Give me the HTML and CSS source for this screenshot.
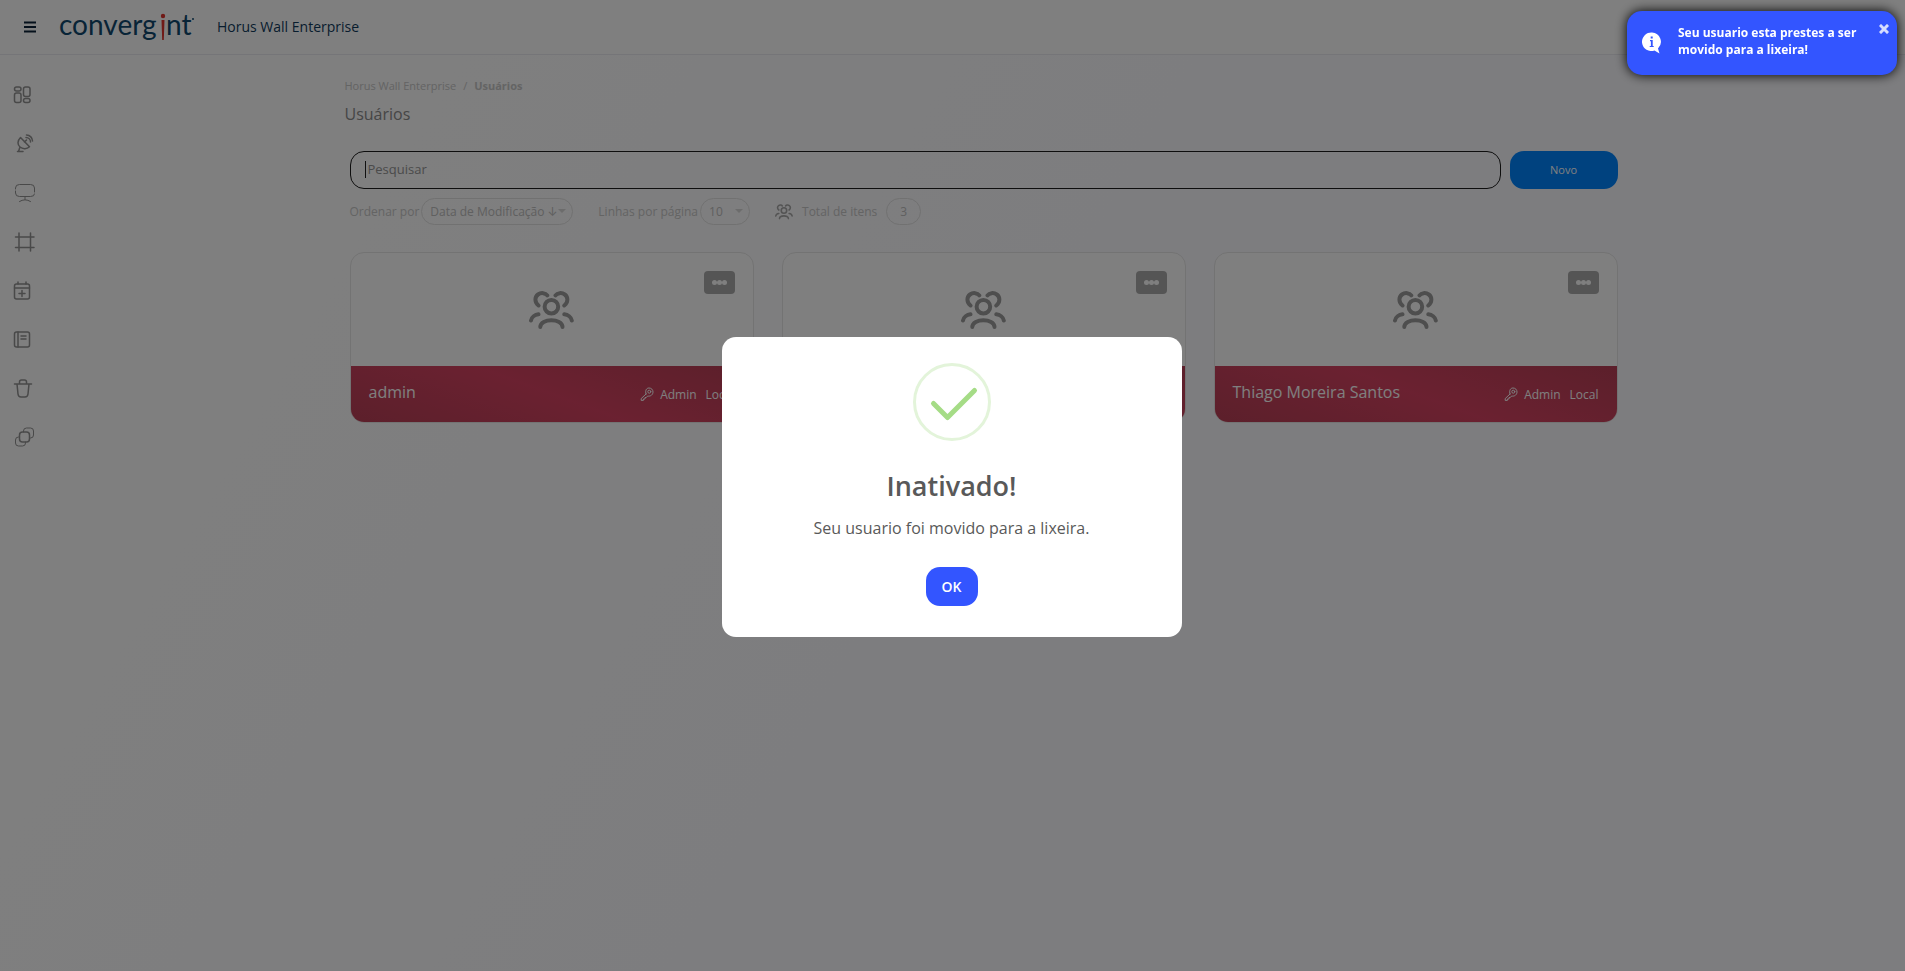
FILE: index.html
```html
<!DOCTYPE html>
<html lang="pt-BR">
<head>
    <meta charset="UTF-8">
    <meta name="viewport" content="width=device-width, initial-scale=1">
    <title>Horus Wall Enterprise</title>
    <link rel="stylesheet" href="styles.css">
</head>
<body>
<!--shared icons-->
<svg class="sprite" aria-hidden="true">
    <symbol id="users" viewBox="0 0 45 39">
        <circle cx="22.4" cy="15.7" r="6.8"/>
        <path d="M11.3 36C11.3 27 33.5 27 33.5 36M2 29.5C2.5 26 6 23.7 9.5 23.3M42.8 29.5C42.3 26 38.8 23.7 35.3 23.3M9.5 14.5C5.5 11.5 5.5 6 9 3.5C12 1.3 16.5 1.8 18.3 4.3M35.3 14.5C39.3 11.5 39.3 6 35.8 3.5C32.8 1.3 28.3 1.8 26.5 4.3"/>
    </symbol>
    <symbol id="key" viewBox="0 0 14 14">
        <path d="M6 7L1.2 11.6V13.4H3.4V12H5V10.5H6.3L7.6 9C10.8 9.7 13 7.4 13 5C13 2.7 11.3 1 9 1C6.4 1 4.9 3.6 6 7Z"/>
        <circle cx="9.3" cy="4.7" r="1.5"/>
    </symbol>
</svg>

<!--header-->
<header class="header">
    <button class="menu_btn" type="button" aria-label="Menu">
        <svg width="12" height="12" viewBox="0 0 12 12"><path d="M0 1.5H12M0 6H12M0 10.5H12"/></svg>
    </button>
    <a class="logo" href="#" aria-label="convergint">
        <svg width="138" height="44" viewBox="0 -6 138 44">
            <text x="0" y="24">converg</text>
            <text x="107" y="24">nt</text>
            <circle class="logo_red" cx="104" cy="5" r="2.2"/>
            <path class="logo_red" d="M102.5 9H105.5L104.8 29H103.2Z"/>
            <circle class="logo_mark" cx="134" cy="8" r="1"/>
        </svg>
    </a>
    <span class="header_title">Horus Wall Enterprise</span>
</header>

<div class="layout">
    <!--side menu-->
    <nav class="sidebar">
        <a href="#" aria-label="Dashboard">
            <svg viewBox="0 0 20 20"><rect x="1" y="2" width="6.5" height="4" rx="2"/><rect x="1" y="8" width="6.5" height="9.5" rx="2"/><rect x="10" y="2" width="6.5" height="9.5" rx="2"/><rect x="10" y="13.5" width="6.5" height="4" rx="2"/></svg>
        </a>
        <a href="#" aria-label="Antena">
            <svg viewBox="0 0 20 20"><path d="M7 3.5C3.5 7 4 11 6.5 13C9.5 15.5 13.5 15 16 12.7ZM11 8L13 6M6.5 13L5 17.5M4 17.5H9.5M12.5 3.5C15 3.5 17 5.5 17 8M13 1C16.5 1 19 4 19 7"/></svg>
        </a>
        <a href="#" aria-label="Monitor">
            <svg viewBox="0 0 20 20"><path class="thin" d="M2 6V5Q2 1.5 6 1.5H17Q21 1.5 21 5V9M2 8V10Q2 13.5 6 13.5H17Q21 13.5 21 11M11.5 13.5V16.5M6 18.5Q11.5 15 17 18.5"/></svg>
        </a>
        <a href="#" aria-label="Quadro">
            <svg viewBox="0 0 20 20"><path d="M5.5 1V19M17 1V19M2 5H20.5M2 15.5H20.5"/></svg>
        </a>
        <a href="#" aria-label="Agenda">
            <svg viewBox="0 0 20 20"><rect x="1" y="3" width="15" height="15" rx="2"/><path d="M1 7H16M4.5 1V3M12.5 1V3M8.5 9.5V15.5M5.5 12.5H11.5"/></svg>
        </a>
        <a href="#" aria-label="Registros">
            <svg viewBox="0 0 20 20"><rect x="1" y="2" width="15" height="15" rx="2"/><path d="M4.5 2V17M7.5 6H12.5M7.5 9H12.5"/></svg>
        </a>
        <a href="#" aria-label="Lixeira">
            <svg viewBox="0 0 20 20"><path d="M1 5H18M6 5V3Q6 1 8 1H11Q13 1 13 3V5M3.5 5L4.5 15Q4.8 18 7.5 18H11.5Q14.2 18 14.5 15L15.5 5"/></svg>
        </a>
        <a href="#" aria-label="Grupos">
            <svg viewBox="0 0 20 20"><rect x="6" y="4" width="10" height="10" rx="3"/><path class="thin" d="M10 4V3Q10 0 13 0H17Q20 0 20 3V7Q20 10 17 10H16M6 9H5Q2 9 2 12V15Q2 18 5 18H9Q12 18 12 15V14"/></svg>
        </a>
    </nav>

    <!--users page-->
    <main class="content">
        <nav class="breadcrumb">
            <a href="#">Horus Wall Enterprise</a>
            <span>/</span>
            <b>Usuários</b>
        </nav>
        <h1 class="page_title">Usuários</h1>

        <form class="search">
            <label class="search_box">
                <input type="text" placeholder="Pesquisar" aria-label="Pesquisar">
            </label>
            <button class="btn_new" type="button">Novo</button>
        </form>

        <div class="filters">
            <label for="order">Ordenar por</label>
            <span class="select select_order">
                <select id="order"><option>Data de Modificação ↓</option></select>
            </span>
            <label for="rows">Linhas por página</label>
            <span class="select select_rows">
                <select id="rows"><option>10</option></select>
            </span>
            <svg class="filters_icon" aria-hidden="true"><use href="#users"/></svg>
            <span>Total de itens</span>
            <span class="total">3</span>
        </div>

        <div class="cards">
            <article class="card">
                <div class="card_body">
                    <svg class="card_icon" aria-hidden="true"><use href="#users"/></svg>
                    <button class="card_menu" type="button" aria-label="Opções"><i></i><i></i><i></i></button>
                </div>
                <div class="card_footer">
                    <h2>admin</h2>
                    <svg class="key" aria-hidden="true"><use href="#key"/></svg>
                    <span>Admin</span>
                    <span>Local</span>
                </div>
            </article>
            <article class="card">
                <div class="card_body">
                    <svg class="card_icon" aria-hidden="true"><use href="#users"/></svg>
                    <button class="card_menu" type="button" aria-label="Opções"><i></i><i></i><i></i></button>
                </div>
                <div class="card_footer"></div>
            </article>
            <article class="card">
                <div class="card_body">
                    <svg class="card_icon" aria-hidden="true"><use href="#users"/></svg>
                    <button class="card_menu" type="button" aria-label="Opções"><i></i><i></i><i></i></button>
                </div>
                <div class="card_footer">
                    <h2>Thiago Moreira Santos</h2>
                    <svg class="key" aria-hidden="true"><use href="#key"/></svg>
                    <span>Admin</span>
                    <span>Local</span>
                </div>
            </article>
        </div>
    </main>
</div>

<!--confirmation-->
<div class="overlay">
    <div class="modal" role="dialog" aria-labelledby="modal_title">
        <svg class="modal_icon" viewBox="0 0 78 78" aria-hidden="true">
            <circle cx="39" cy="39" r="37.5"/>
            <path d="M20.5 40.5L34.5 54.5L61.5 27.5"/>
        </svg>
        <h2 id="modal_title">Inativado!</h2>
        <p>Seu usuario foi movido para a lixeira.</p>
        <button type="button">OK</button>
    </div>
</div>

<!--toast-->
<div class="toast" role="status">
    <svg class="toast_icon" viewBox="0 0 20 22" aria-hidden="true">
        <path d="M10 0.5A9.3 9.3 0 1 0 12.5 18.5L17.5 21.5L16 16.5A9.3 9.3 0 0 0 10 0.5Z"/>
        <path class="toast_i" d="M8.7 4.5H10.7V6.5H8.7ZM8 8H10.7V14H11.7V15H7.7V14H8.9V9.2H8Z"/>
    </svg>
    <p>Seu usuario esta prestes a ser movido para a lixeira!</p>
    <button type="button" aria-label="Fechar">
        <svg width="10" height="10" viewBox="0 0 10 10"><path d="M2 2L8 8M8 2L2 8"/></svg>
    </button>
</div>
</body>
</html>
```
FILE: styles.css
```css
*{
    margin: 0;
    padding: 0;
    box-sizing: border-box;
}
body
{
    min-height: 100vh;
    font-family: "Open Sans", "Noto Sans", sans-serif;
    font-size: 12px;
    color: #c8c8c8;
    background: linear-gradient(120deg, #fefefe 20%, #fafaff 60%);
}
a
{
    color: inherit;
    text-decoration: none;
}
button,input,select
{
    font-family: inherit;
    border: 0;
    background: none;
}
svg
{
    display: block;
    fill: none;
    stroke-linecap: round;
    stroke-linejoin: round;
}
.sprite
{
    position: absolute;
    width: 0;
    height: 0;
}

/*header*/
.header
{
    display: flex;
    align-items: center;
    height: 55px;
    padding-left: 24px;
    border-bottom: 1px solid #eaeaf0;
    background: #fff;
}
.menu_btn svg
{
    stroke: #0c2238;
    stroke-width: 2;
    stroke-linecap: butt;
}
.logo
{
    margin: 0 20px 0 23px;
}
.logo text
{
    font-family: Lato, sans-serif;
    font-size: 28px;
    fill: #10486e;
}
.logo .logo_red
{
    fill: #e0352f;
}
.logo .logo_mark
{
    fill: #10486e;
}
.header_title
{
    padding-bottom: 1px;
    font-size: 14px;
    font-weight: 500;
    color: #103a5c;
}

/*side menu*/
.layout
{
    display: flex;
}
.sidebar
{
    flex: none;
    width: 62px;
    padding: 15px 0 0 13px;
}
.sidebar a
{
    display: flex;
    align-items: center;
    height: 49px;
}
.sidebar svg
{
    width: 21px;
    height: 20px;
    overflow: visible;
    stroke: #929292;
    stroke-width: 1.5;
}
.sidebar .thin
{
    stroke-width: 1;
}

/*content*/
.content
{
    flex: 1;
    max-width: 1278px;
    margin: 0 auto;
    padding-top: 23px;
}
.breadcrumb
{
    display: flex;
    gap: 7px;
    font-size: 11px;
    line-height: 16px;
}
.page_title
{
    margin-top: 8px;
    font-size: 16px;
    font-weight: 400;
    line-height: 24px;
    color: #8c8c8c;
}
.search
{
    display: flex;
    gap: 9px;
    margin: 25px 5px 0;
}
.search_box
{
    flex: 1;
    position: relative;
}
.search_box input
{
    width: 100%;
    height: 38px;
    padding: 0 17px 2px;
    border: 1px solid #1c1c1c;
    border-radius: 14px;
    font-size: 13px;
}
.search_box input::placeholder
{
    color: #969696;
}
/*text cursor*/
.search_box::after
{
    content: "";
    position: absolute;
    left: 15px;
    top: 10px;
    width: 1px;
    height: 17px;
    background: #222;
}
.btn_new
{
    width: 108px;
    height: 38px;
    padding-bottom: 2px;
    border-radius: 14px;
    font-size: 11px;
    color: #fff;
    background: #0084ff;
}

/*filters*/
.filters
{
    display: flex;
    align-items: center;
    margin: 9px 5px 27px;
}
.select
{
    position: relative;
    margin: 0 25px 0 2px;
}
.select::after
{
    content: "";
    position: absolute;
    right: 7px;
    top: 11px;
    border: 4px solid transparent;
    border-top-color: #d8d8d8;
    border-bottom: 0;
}
.select select,.total
{
    display: block;
    height: 27px;
    border: 1px solid #e2e2e2;
    border-radius: 14px;
    font-size: 12px;
    color: #c0c0c0;
}
.select select
{
    width: 100%;
    padding-left: 8px;
    font-family: "Open Sans", Inter, sans-serif;
    appearance: none;
}
.select_order
{
    width: 152px;
}
.select_rows
{
    width: 50px;
}
.filters_icon
{
    width: 18px;
    height: 16px;
    margin-right: 9px;
    stroke: #a8a8a8;
    stroke-width: 4;
}
.total
{
    width: 35px;
    margin-left: 9px;
    line-height: 25px;
    text-align: center;
}

/*cards*/
.cards
{
    display: grid;
    grid-template-columns: repeat(3, 1fr);
    gap: 28px;
    margin: 0 5px;
}
.card
{
    border: 1px solid #e6e6e6;
    border-radius: 14px;
    overflow: hidden;
    background: #fff;
}
.card_body
{
    position: relative;
    display: flex;
    justify-content: center;
    padding: 38px 0 36px;
}
.card_icon
{
    width: 45px;
    height: 39px;
    stroke: #9c9c9c;
    stroke-width: 4;
}
.card_menu
{
    position: absolute;
    right: 18px;
    top: 18px;
    display: flex;
    justify-content: center;
    width: 31px;
    height: 23px;
    padding-top: 9px;
    border-radius: 4px;
    background: #ababab;
}
.card_menu i
{
    width: 5px;
    height: 5px;
    border-radius: 50%;
    background: #fff;
}
.card_footer
{
    display: flex;
    align-items: center;
    gap: 9px;
    height: 56px;
    padding: 0 18px;
    font-weight: 500;
    color: #fff;
    background: linear-gradient(20deg, #b83f56, #d64362 50%, #b83f56);
}
.card_footer h2
{
    flex: 1;
    padding-bottom: 4px;
    font-size: 16px;
    font-weight: 500;
    line-height: 22px;
}
.key
{
    width: 14px;
    height: 14px;
    stroke: #fff;
    stroke-width: 1;
}
.card_footer .key
{
    margin-right: -3px;
}

/*modal*/
.overlay
{
    position: fixed;
    inset: 0;
    display: flex;
    align-items: center;
    justify-content: center;
    padding: 3px 2px 0 0;
    background: rgba(0, 0, 0, .5);
}
.modal
{
    display: flex;
    flex-direction: column;
    align-items: center;
    width: 460px;
    padding: 26px 20px 31px;
    border-radius: 14px;
    color: #595959;
    background: #fff;
}
.modal_icon
{
    width: 78px;
    height: 78px;
    stroke: #a5dc86;
    stroke-width: 5;
}
.modal_icon circle
{
    stroke: #e3f4da;
    stroke-width: 3;
}
.modal h2
{
    margin-top: 25px;
    font-size: 27px;
    font-weight: 600;
    line-height: 40px;
}
.modal p
{
    margin: 10px 0 27px;
    font-size: 16px;
    line-height: 24px;
}
.modal button
{
    width: 52px;
    height: 39px;
    padding-bottom: 1px;
    border-radius: 14px;
    font-size: 14px;
    font-weight: 600;
    color: #fff;
    background: #3355ff;
}

/*toast*/
.toast
{
    position: fixed;
    top: 11px;
    right: 8px;
    display: flex;
    align-items: flex-start;
    width: 270px;
    height: 64px;
    padding: 13px 8px 0 15px;
    border-radius: 15px;
    color: #fff;
    background: #3355ff;
    box-shadow: 0 0 12px #000;
}
.toast_icon
{
    width: 20px;
    height: 22px;
    margin: 8px 16px 0 0;
    fill: #fff;
}
.toast_icon .toast_i
{
    fill: #3355ff;
}
.toast p
{
    flex: 1;
    padding-right: 16px;
    font-weight: 700;
    line-height: 17px;
}
.toast button svg
{
    stroke: #d6ddff;
    stroke-width: 3;
    stroke-linecap: square;
}
```
